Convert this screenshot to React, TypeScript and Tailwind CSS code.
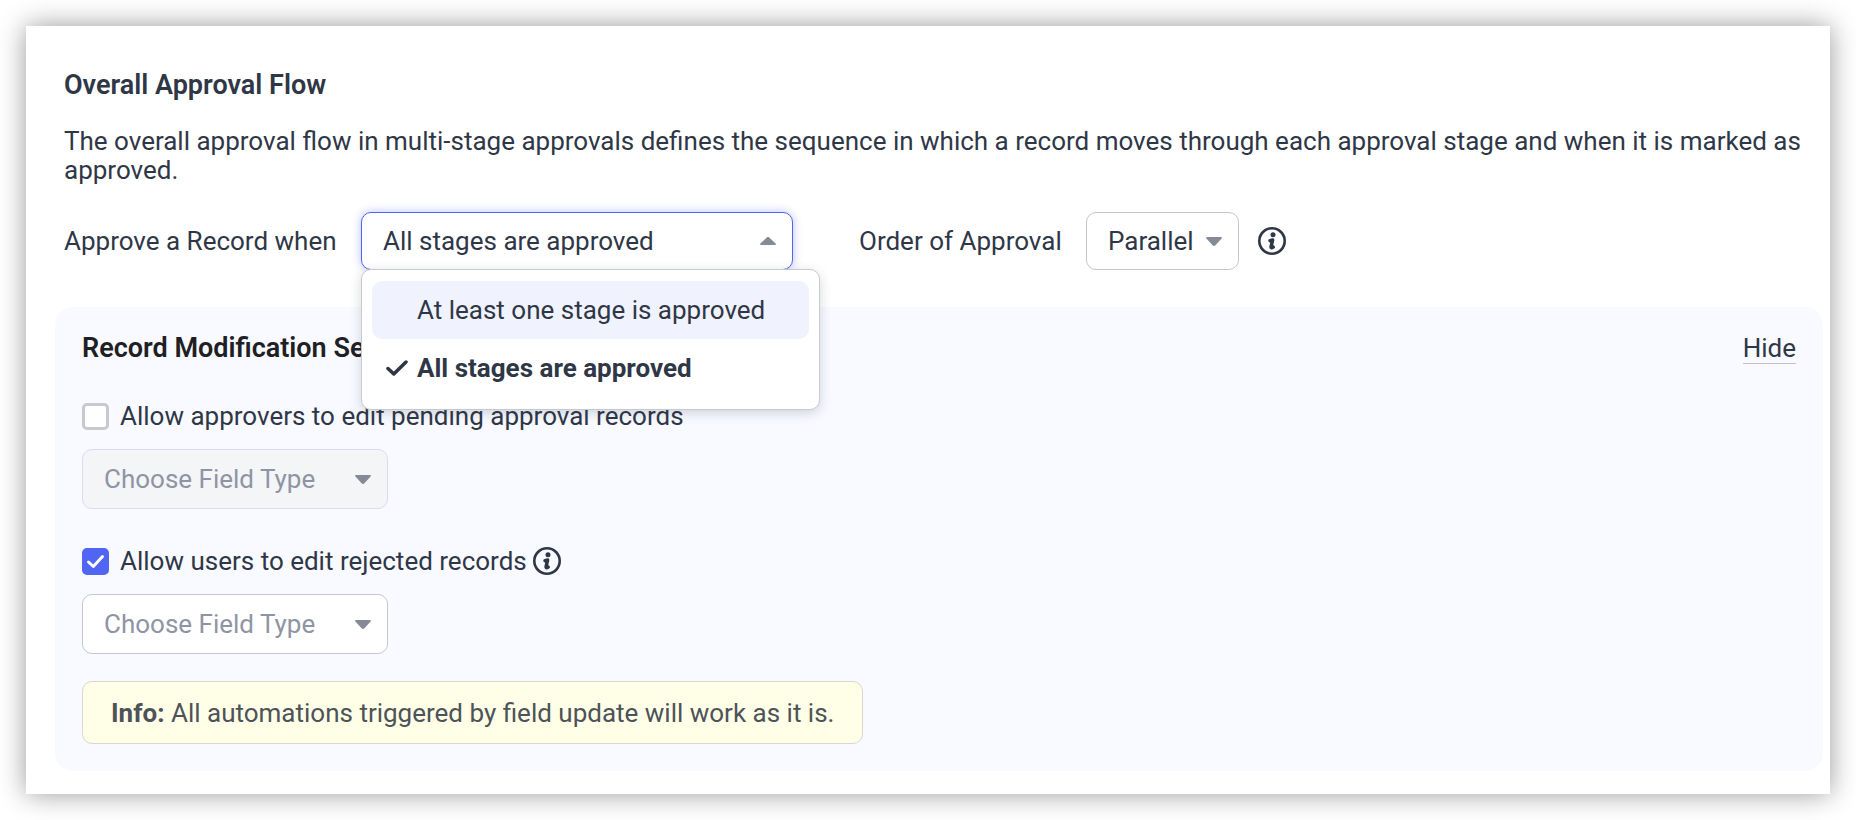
import { useState } from "react";
import type { ReactNode, SelectHTMLAttributes } from "react";
import clsx from "clsx";

const STAGE_RULES = ["At least one stage is approved", "All stages are approved"];

function Caret({ up = false }: { up?: boolean }) {
    return (
        <svg
            viewBox="0 0 16 9"
            className="pointer-events-none absolute inset-y-0 right-[17px] my-auto h-[9px] w-4 fill-[#858a96]"
            aria-hidden="true"
        >
            {up ? (
                <path d="M1 8h14c.9 0 1.300-.9.6-1.500L9.200.5c-.7-.6-1.700-.6-2.400 0L.4 6.500C-.3 7.100.1 8 1 8z" />
            ) : (
                <path d="M1 0h14c.9 0 1.300.9.6 1.500L9.200 8.500c-.7.6-1.700.6-2.400 0L.4 1.500C-.3.9.1 0 1 0z" />
            )}
        </svg>
    );
}

function InfoIcon() {
    return (
        <svg viewBox="0 0 28 28" className="size-7 shrink-0 text-[#2f3747]" fill="none" aria-hidden="true">
            <circle cx="14" cy="14" r="12.700" stroke="currentColor" strokeWidth="2.600" />
            <circle cx="15" cy="7.800" r="2.500" fill="currentColor" />
            <path
                d="M12 13.600l2.600-.6-1.500 6.600c-.2 1.400.8 1.300 2.100.5"
                stroke="currentColor"
                strokeWidth="3.500"
                strokeLinecap="round"
                strokeLinejoin="round"
            />
        </svg>
    );
}

type SelectProps = SelectHTMLAttributes<HTMLSelectElement> & {
    open?: boolean;
    wrapperClass?: string;
};

function Select({ open, wrapperClass, className, children, ...rest }: SelectProps) {
    return (
        <div className={clsx("relative", wrapperClass)}>
            <select
                className={clsx(
                    "block w-full appearance-none rounded-[10px] border bg-white pl-[21px] pr-10 outline-none disabled:border-[#d9dafa] disabled:bg-[#f4f5f7] disabled:opacity-100",
                    open ? "border-[#5165f5] shadow-[0_0_10px_rgba(81,101,245,0.4)]" : "border-[#c5c6d0]",
                    className
                )}
                {...rest}
            >
                {children}
            </select>
            <Caret up={open} />
        </div>
    );
}

function CheckRow({ id, defaultChecked, children }: { id: string; defaultChecked?: boolean; children: ReactNode }) {
    return (
        <div className="flex h-8 items-center">
            <span className="relative mr-[11px] size-[27px] shrink-0">
                <input
                    id={id}
                    type="checkbox"
                    defaultChecked={defaultChecked}
                    className="peer block size-full appearance-none rounded-[5px] border-3 border-[#c8c9cf] bg-white checked:border-[#5165f5] checked:bg-[#5165f5]"
                />
                <svg
                    viewBox="0 0 27 27"
                    className="pointer-events-none absolute inset-0 hidden size-full peer-checked:block"
                    fill="none"
                    aria-hidden="true"
                >
                    <path d="M6.500 14l4.800 4.500 9.200-10" stroke="white" strokeWidth="3" strokeLinecap="round" strokeLinejoin="round" />
                </svg>
            </span>
            {children}
        </div>
    );
}

export default function App() {
    const [rule, setRule] = useState(STAGE_RULES[1]);

    return (
        <main className="bg-white p-[26px] font-[Roboto,sans-serif] text-[26px] leading-8 text-[#2f3747]">
            <section className="bg-white pt-[43px] pb-[23px] shadow-[0_0_26px_rgba(0,0,0,0.4)]">
                <div className="pl-[38px] pr-4">
                    <h1 className="text-[27px] leading-8 font-semibold">Overall Approval Flow</h1>
                    <p className="mt-[26px] leading-[29px]">
                        The overall approval flow in multi-stage approvals defines the sequence in which a record moves
                        through each approval stage and when it is marked as approved.
                    </p>

                    <div className="mt-[27px] flex items-center">
                        <label htmlFor="rule" className="w-[297px] shrink-0 whitespace-nowrap">
                            Approve a Record when
                        </label>
                        <div className="relative w-[432px]">
                            <Select
                                id="rule"
                                open
                                className="h-[58px]"
                                value={rule}
                                onChange={(e) => setRule(e.target.value)}
                            >
                                {STAGE_RULES.map((r) => (
                                    <option key={r}>{r}</option>
                                ))}
                            </Select>

                            {/* Open menu */}
                            <ul
                                role="listbox"
                                aria-label="Approve a Record when"
                                className="absolute top-[57px] left-0 z-10 w-[459px] rounded-[10px] border border-[#c9cad0] bg-white px-[10px] pt-[11px] pb-3 shadow-[0_3px_12px_rgba(47,55,71,0.2)]"
                            >
                                {STAGE_RULES.map((r, i) => (
                                    <li
                                        key={r}
                                        role="option"
                                        aria-selected={r === rule}
                                        onClick={() => setRule(r)}
                                        className={clsx(
                                            "flex h-[58px] items-center rounded-[10px] pl-[14px] whitespace-nowrap",
                                            i === 0 && "bg-[#f0f3fd]",
                                            r === rule && "font-bold"
                                        )}
                                    >
                                        <span className="w-[31px]">
                                            {r === rule && (
                                                <svg viewBox="0 0 22 16" className="h-4 w-[22px]" fill="none" aria-hidden="true">
                                                    <path
                                                        d="M2 8.500l5.800 5.500L20 2"
                                                        stroke="currentColor"
                                                        strokeWidth="3.500"
                                                        strokeLinecap="round"
                                                        strokeLinejoin="round"
                                                    />
                                                </svg>
                                            )}
                                        </span>
                                        {r}
                                    </li>
                                ))}
                            </ul>
                        </div>

                        <label htmlFor="order" className="ml-[66px] w-[227px] shrink-0 whitespace-nowrap">
                            Order of Approval
                        </label>
                        <Select id="order" wrapperClass="w-[153px]" className="h-[58px]">
                            <option>Parallel</option>
                            <option>Sequential</option>
                        </Select>
                        <button type="button" aria-label="About order of approval" className="ml-[19px]">
                            <InfoIcon />
                        </button>
                    </div>
                </div>

                {/* Record modification */}
                <div className="mt-[37px] mr-[7px] ml-[29px] rounded-[18px] bg-[#f8faff] px-[27px] pt-[25px] pb-[27px]">
                    <div className="flex h-8 items-center justify-between">
                        <h2 className="text-[27px] leading-8 font-semibold text-[#1e2024]">Record Modification Settings</h2>
                        <a href="#hide" className="border-b border-[#c0c2ca] leading-[30px]">
                            Hide
                        </a>
                    </div>

                    <div className="mt-9">
                        <CheckRow id="pending">
                            <label htmlFor="pending">Allow approvers to edit pending approval records</label>
                        </CheckRow>
                        <Select
                            aria-label="Field type for pending records"
                            disabled
                            wrapperClass="mt-[17px] w-[306px]"
                            className="h-[60px] text-[#8f94a5]"
                        >
                            <option>Choose Field Type</option>
                        </Select>
                    </div>

                    <div className="mt-9">
                        <CheckRow id="rejected" defaultChecked>
                            <label htmlFor="rejected" className="mr-[6px]">
                                Allow users to edit rejected records
                            </label>
                            <button type="button" aria-label="About rejected records">
                                <InfoIcon />
                            </button>
                        </CheckRow>
                        <Select
                            aria-label="Field type for rejected records"
                            wrapperClass="mt-[17px] w-[306px]"
                            className="h-[60px] text-[#8f94a5]"
                        >
                            <option>Choose Field Type</option>
                        </Select>
                    </div>

                    <p className="mt-[27px] flex h-[63px] w-fit items-center rounded-[10px] border border-[#d8d8d0] bg-[#ffffe8] px-7 text-[#4d5358] whitespace-pre">
                        <strong className="font-bold">Info:</strong> All automations triggered by field update will work as it is.
                    </p>
                </div>
            </section>
        </main>
    );
}
